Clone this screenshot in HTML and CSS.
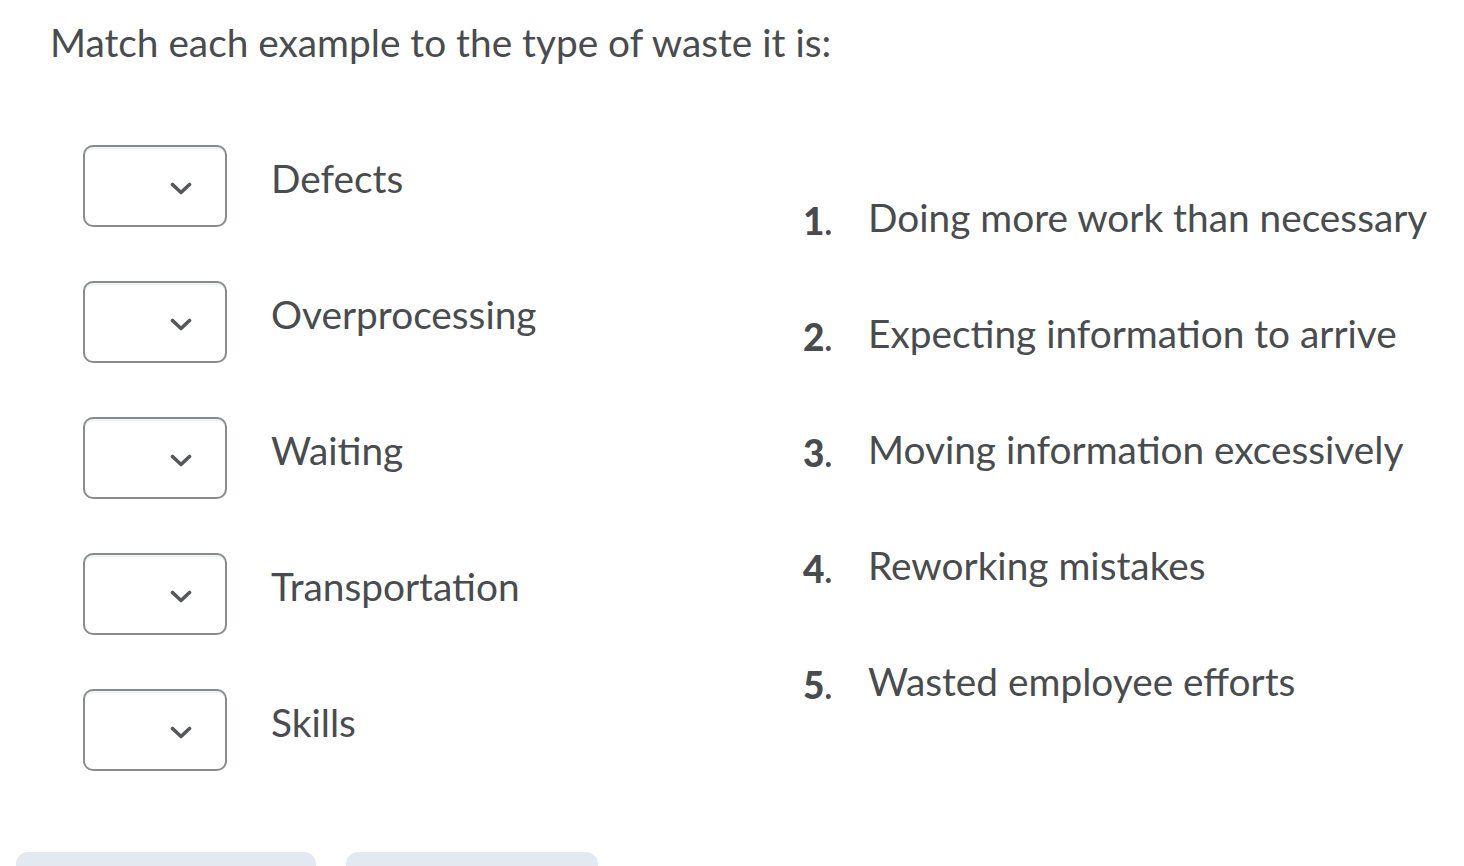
FILE: index.html
```html
<!DOCTYPE html>
<html>
<head>
<meta charset="utf-8">
<link rel="stylesheet" href="styles.css">
</head>
<body>
<div class="page">
  <h1 class="question">Match each example to the type of waste it is:</h1>
  <div class="match">
    <div class="left">
      <div class="row"><div class="select"><svg class="chev" viewBox="0 0 22 13" width="22" height="13"><path d="M2.5 2.5 L11 10.5 L19.5 2.5" fill="none" stroke="#55585b" stroke-width="3.6" stroke-linecap="round" stroke-linejoin="round"/></svg></div><span class="label">Defects</span></div>
      <div class="row"><div class="select"><svg class="chev" viewBox="0 0 22 13" width="22" height="13"><path d="M2.5 2.5 L11 10.5 L19.5 2.5" fill="none" stroke="#55585b" stroke-width="3.6" stroke-linecap="round" stroke-linejoin="round"/></svg></div><span class="label">Overprocessing</span></div>
      <div class="row"><div class="select"><svg class="chev" viewBox="0 0 22 13" width="22" height="13"><path d="M2.5 2.5 L11 10.5 L19.5 2.5" fill="none" stroke="#55585b" stroke-width="3.6" stroke-linecap="round" stroke-linejoin="round"/></svg></div><span class="label">Waiting</span></div>
      <div class="row"><div class="select"><svg class="chev" viewBox="0 0 22 13" width="22" height="13"><path d="M2.5 2.5 L11 10.5 L19.5 2.5" fill="none" stroke="#55585b" stroke-width="3.6" stroke-linecap="round" stroke-linejoin="round"/></svg></div><span class="label">Transportation</span></div>
      <div class="row"><div class="select"><svg class="chev" viewBox="0 0 22 13" width="22" height="13"><path d="M2.5 2.5 L11 10.5 L19.5 2.5" fill="none" stroke="#55585b" stroke-width="3.6" stroke-linecap="round" stroke-linejoin="round"/></svg></div><span class="label">Skills</span></div>
    </div>
    <ol class="choices">
      <li><span class="num">1<span class="dot">.</span></span><span class="text">Doing more work than necessary</span></li>
      <li><span class="num">2<span class="dot">.</span></span><span class="text">Expecting information to arrive</span></li>
      <li><span class="num">3<span class="dot">.</span></span><span class="text">Moving information excessively</span></li>
      <li><span class="num">4<span class="dot">.</span></span><span class="text">Reworking mistakes</span></li>
      <li><span class="num">5<span class="dot">.</span></span><span class="text">Wasted employee efforts</span></li>
    </ol>
  </div>
  <div class="buttons">
    <div class="btn btn-a"></div>
    <div class="btn btn-b"></div>
  </div>
</div>
</body>
</html>
```

FILE: styles.css
```css
html, body {
  margin: 0;
  padding: 0;
  background: #ffffff;
  overflow: hidden;
}
body {
  font-family: Lato, "Open Sans", sans-serif;
  color: #494c4e;
}
.page {
  width: 1464px;
  height: 866px;
  position: relative;
}
.question {
  margin: 0;
  padding: 19px 0 0 50px;
  font-size: 38.8px;
  font-weight: 400;
  line-height: 46px;
}
.match {
  display: flex;
  margin-top: 80px;
}
.left {
  width: 720px;
  padding-left: 83px;
  display: flex;
  flex-direction: column;
}
.row {
  display: flex;
  height: 136px;
  align-items: flex-start;
}
.select {
  box-sizing: border-box;
  width: 144px;
  height: 82px;
  border: 2px solid #868c8f;
  border-radius: 10px;
  background: #ffffff;
  box-shadow: inset 0 2px 0 #f1f3f5;
  display: flex;
  align-items: center;
  justify-content: flex-end;
  padding-right: 33px;
  padding-top: 4px;
}
.label {
  margin-left: 44px;
  font-size: 38.8px;
  line-height: 46px;
  padding-top: 10px;
}
.choices {
  list-style: none;
  margin: 0;
  padding: 49px 0 0 0;
}
.choices li {
  display: flex;
  align-items: flex-start;
  height: 116px;
}
.num {
  width: 65px;
  font-weight: 900;
  font-size: 37px;
  line-height: 46px;
  margin-top: 4px;
}
.dot {
  font-weight: 700;
  font-size: 32px;
}
.text {
  font-size: 38.8px;
  line-height: 46px;
}
.buttons {
  position: absolute;
  left: 16px;
  top: 852px;
  display: flex;
  gap: 30px;
}
.btn {
  height: 40px;
  background: #e3e9f1;
  border-radius: 12px;
}
.btn-a { width: 300px; }
.btn-b { width: 252px; }
```
